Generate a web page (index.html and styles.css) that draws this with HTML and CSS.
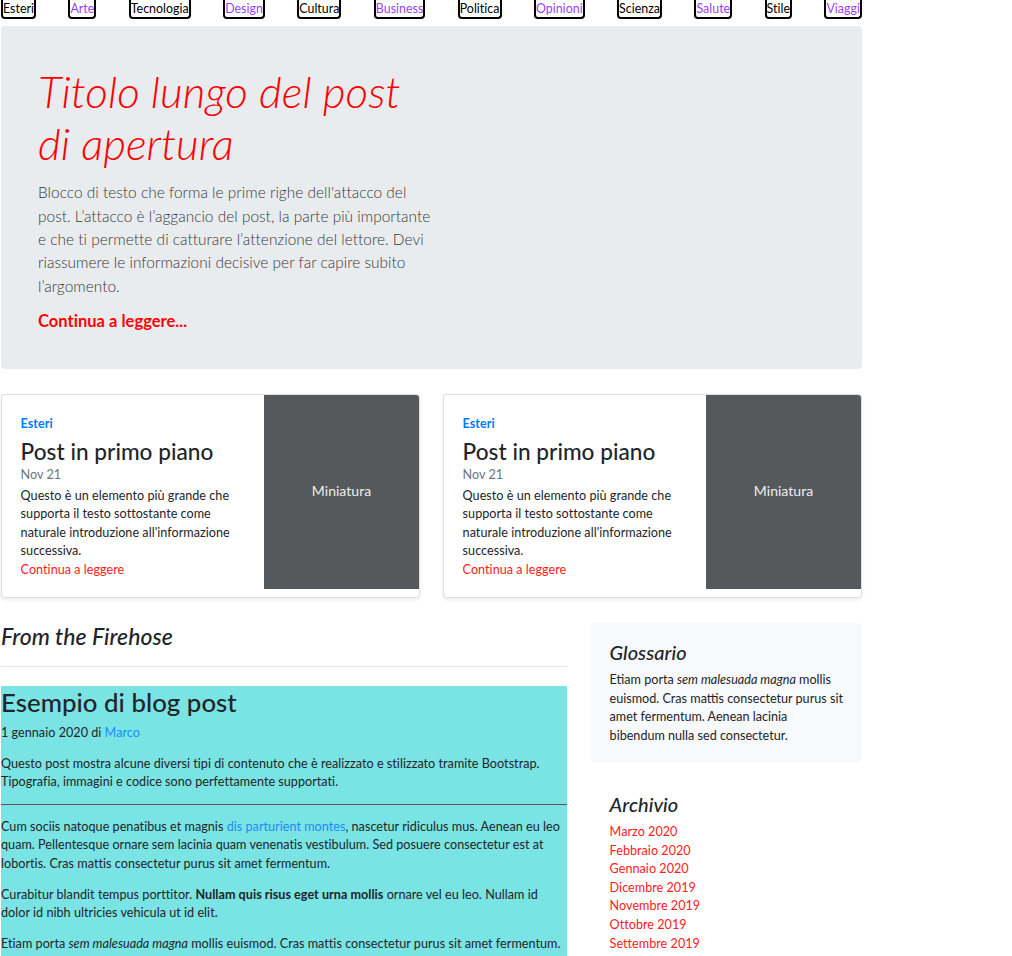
FILE: index.html
```html
<!DOCTYPE html>
<html lang="it">
<head>
<meta charset="utf-8">
<title>Blog</title>
<link rel="stylesheet" href="styles.css">
</head>
<body>
<div class="page">
  <nav class="topnav">
    <a class="tab" href="#">Esteri</a>
    <a class="tab visited" href="#">Arte</a>
    <a class="tab" href="#">Tecnologia</a>
    <a class="tab visited" href="#">Design</a>
    <a class="tab" href="#">Cultura</a>
    <a class="tab visited" href="#">Business</a>
    <a class="tab" href="#">Politica</a>
    <a class="tab visited" href="#">Opinioni</a>
    <a class="tab" href="#">Scienza</a>
    <a class="tab visited" href="#">Salute</a>
    <a class="tab" href="#">Stile</a>
    <a class="tab visited" href="#">Viaggi</a>
  </nav>

  <section class="hero">
    <div class="hero-col">
      <h1 class="hero-title">Titolo lungo del post di apertura</h1>
      <p class="hero-lead">Blocco di testo che forma le prime righe dell'attacco del post. L’attacco è l’aggancio del post, la parte più importante e che ti permette di catturare l’attenzione del lettore. Devi riassumere le informazioni decisive per far capire subito l’argomento.</p>
      <p class="hero-more"><a href="#">Continua a leggere...</a></p>
    </div>
  </section>

  <div class="featured">
    <article class="card">
      <div class="card-body">
        <strong class="card-cat">Esteri</strong>
        <h3 class="card-title">Post in primo piano</h3>
        <div class="card-date">Nov 21</div>
        <p class="card-text">Questo è un elemento più grande che supporta il testo sottostante come naturale introduzione all'informazione successiva.</p>
        <a class="card-link" href="#">Continua a leggere</a>
      </div>
      <div class="thumb">Miniatura</div>
    </article>
    <article class="card">
      <div class="card-body">
        <strong class="card-cat">Esteri</strong>
        <h3 class="card-title">Post in primo piano</h3>
        <div class="card-date">Nov 21</div>
        <p class="card-text">Questo è un elemento più grande che supporta il testo sottostante come naturale introduzione all'informazione successiva.</p>
        <a class="card-link" href="#">Continua a leggere</a>
      </div>
      <div class="thumb">Miniatura</div>
    </article>
  </div>

  <main class="main">
    <div class="main-col">
      <h3 class="section-title">From the Firehose</h3>
      <div class="post">
        <h2 class="post-title">Esempio di blog post</h2>
        <p class="post-meta">1 gennaio 2020 di <a href="#">Marco</a></p>
        <p>Questo post mostra alcune diversi tipi di contenuto che è realizzato e stilizzato tramite Bootstrap. Tipografia, immagini e codice sono perfettamente supportati.</p>
        <hr>
        <p>Cum sociis natoque penatibus et magnis <a href="#">dis parturient montes</a>, nascetur ridiculus mus. Aenean eu leo quam. Pellentesque ornare sem lacinia quam venenatis vestibulum. Sed posuere consectetur est at lobortis. Cras mattis consectetur purus sit amet fermentum.</p>
        <p>Curabitur blandit tempus porttitor. <strong>Nullam quis risus eget urna mollis</strong> ornare vel eu leo. Nullam id dolor id nibh ultricies vehicula ut id elit.</p>
        <p>Etiam porta <em>sem malesuada magna</em> mollis euismod. Cras mattis consectetur purus sit amet fermentum.</p>
        <h2 class="post-sub">Intestazione</h2>
        <p>Vivamus sagittis lacus vel augue laoreet rutrum faucibus dolor auctor. Duis mollis, est non commodo luctus, nisi erat porttitor ligula, eget lacinia odio sem nec elit.</p>
      </div>
    </div>

    <aside class="side-col">
      <div class="side-box">
        <h4 class="side-title">Glossario</h4>
        <p>Etiam porta <em>sem malesuada magna</em> mollis euismod. Cras mattis consectetur purus sit amet fermentum. Aenean lacinia bibendum nulla sed consectetur.</p>
      </div>
      <div class="side-plain">
        <h4 class="side-title">Archivio</h4>
        <ol class="archive">
          <li><a href="#">Marzo 2020</a></li>
          <li><a href="#">Febbraio 2020</a></li>
          <li><a href="#">Gennaio 2020</a></li>
          <li><a href="#">Dicembre 2019</a></li>
          <li><a href="#">Novembre 2019</a></li>
          <li><a href="#">Ottobre 2019</a></li>
          <li><a href="#">Settembre 2019</a></li>
          <li><a href="#">Agosto 2019</a></li>
          <li><a href="#">Luglio 2019</a></li>
        </ol>
      </div>
    </aside>
  </main>
</div>
</body>
</html>
```

FILE: styles.css
```css
* { box-sizing: border-box; }

html, body {
  margin: 0;
  padding: 0;
}

body {
  font-family: Lato, "Open Sans", sans-serif;
  font-size: 12.6px;
  letter-spacing: 0.03px;
  line-height: 18.6px;
  color: #212529;
  background: #fff;
}

.page {
  width: 861px;
  margin-left: 1px;
}

/* top navigation */
.topnav {
  display: flex;
  justify-content: space-between;
  height: 19px;
}

.tab {
  display: block;
  height: 19px;
  padding: 1px 0 0;
  border: 2px solid #000;
  border-top: 0;
  border-radius: 0 0 4px 4px;
  font-size: 12.4px;
  line-height: 16px;
  color: #000;
  text-decoration: none;
}

.tab.visited { color: #9a3ff5; }

/* hero */
.hero {
  margin-top: 7px;
  padding: 39px 37px 35px;
  background: #e9ecef;
  border-radius: 4px;
}

.hero-col { width: 394px; }

.hero-title {
  margin: 0;
  font-size: 44px;
  line-height: 52px;
  font-weight: 300;
  font-style: italic;
  color: #ff0000;
}

.hero-lead {
  margin: 12.4px 0;
  font-size: 15.4px;
  line-height: 23.3px;
  font-weight: 300;
  color: #383838;
}

.hero-more {
  margin: 0;
  font-size: 16.5px;
  line-height: 23.3px;
  font-weight: 700;
}

.hero-more a {
  color: #ff0000;
  text-decoration: none;
}

/* featured cards */
.featured {
  margin-top: 25px;
  display: grid;
  grid-template-columns: 419px 419px;
  gap: 23px;
}

.card {
  display: flex;
  align-items: flex-start;
  height: 204px;
  border: 1px solid rgba(0, 0, 0, .125);
  border-radius: 4px;
  box-shadow: 0 2px 4px rgba(0, 0, 0, .075);
  overflow: hidden;
  background: #fff;
}

.card-body {
  flex: 1;
  align-self: stretch;
  display: flex;
  flex-direction: column;
  align-items: flex-start;
  padding: 20.4px 18.6px 16.8px;
}

.card-cat {
  margin-bottom: 5.4px;
  font-weight: 700;
  color: #007bff;
}

.card-title {
  margin: 0;
  font-size: 22.6px;
  line-height: 26px;
  font-weight: 500;
}

.card-date {
  margin-top: 0.8px;
  margin-bottom: 2.3px;
  color: #6c757d;
}

.card-text { margin: 0 0 auto; }

.card-link {
  color: #ff2020;
  text-decoration: none;
}

.thumb {
  flex-shrink: 0;
  width: 155px;
  height: 194px;
  display: flex;
  align-items: center;
  justify-content: center;
  background: #55595c;
  color: #eceeef;
  font-size: 14px;
}

/* main content */
.main {
  margin-top: 25px;
  display: grid;
  grid-template-columns: 566px 271px;
  gap: 24px;
  align-items: start;
}

.section-title {
  margin: 0 0 19px;
  padding-bottom: 17px;
  border-bottom: 1px solid #e5e5e5;
  font-size: 23px;
  line-height: 26px;
  font-style: italic;
  font-weight: 500;
}

.post {
  padding-top: 1px;
  background: #7ae3e3;
}

.post a {
  color: #1a8cff;
  text-decoration: none;
}

.post-title {
  margin: 0 0 7px;
  font-size: 25.8px;
  line-height: 30px;
  font-weight: 500;
}

.post p { margin: 0 0 12.4px; }

.post hr {
  margin: 11.6px 0 12.4px;
  border: 0;
  border-top: 1px solid #5b5555;
}

.post-sub {
  margin: 0 0 6px;
  font-size: 22.6px;
  line-height: 26px;
  font-weight: 500;
}

/* sidebar */
.side-box {
  margin-bottom: 12.4px;
  padding: 18.6px 18px 18px 18.6px;
  background: #f8f9fa;
  border-radius: 4px;
}

.side-box p {
  margin: 0;
  letter-spacing: 0;
}

.side-plain { padding: 17px 18.6px 18.6px; }

.side-title {
  margin: 0 0 7.6px;
  font-size: 20px;
  line-height: 22.3px;
  font-style: italic;
  font-weight: 500;
}

.side-plain .side-title { margin-bottom: 8px; }

.archive {
  list-style: none;
  margin: 0;
  padding: 0;
}

.archive a {
  color: #ff2020;
  text-decoration: none;
}
```
